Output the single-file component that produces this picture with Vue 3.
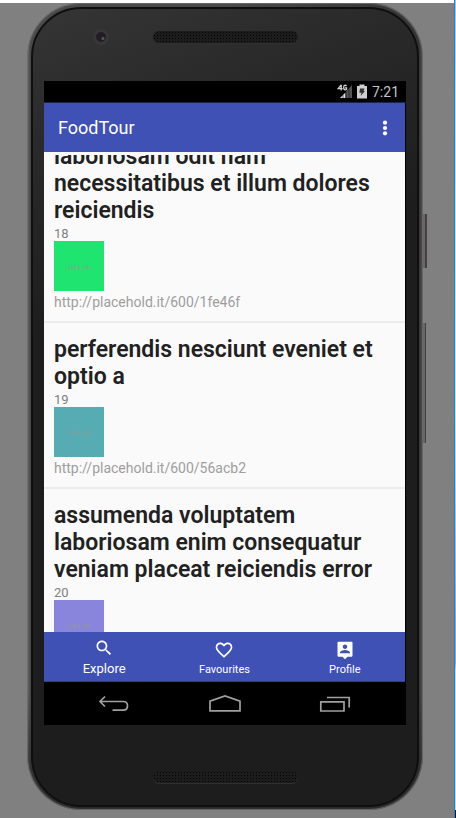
<script setup>
const photos = [
  { id: 18, title: 'laboriosam odit nam necessitatibus et illum dolores reiciendis', tone: 'green', url: 'http://placehold.it/600/1fe46f' },
  { id: 19, title: 'perferendis nesciunt eveniet et optio a', tone: 'teal', url: 'http://placehold.it/600/56acb2' },
  { id: 20, title: 'assumenda voluptatem laboriosam enim consequatur veniam placeat reiciendis error', tone: 'violet' },
]
</script>

<template>
  <div class="desktop">
    <div class="phone">
      <span class="side-key power"></span>
      <span class="side-key volume"></span>
      <div class="body">
        <div class="forehead">
          <span class="camera"></span>
          <span class="speaker"></span>
        </div>

        <div class="screen">
          <div class="status">
            <svg class="signal" width="16" height="15" viewBox="0 0 16 15">
              <path d="M4.2 0.8L1.2 4.6H5.6M4.2 0.8V6.4M9.4 2.2Q9 1.2 8 1.2Q6.7 1.3 6.7 3.5Q6.7 5.8 8.1 5.9Q9.2 5.9 9.5 5.2V3.8H8" fill="none" stroke="#d5d5d5" stroke-width="1.3" />
              <path d="M3 14L8.5 8.5V14Z" fill="#e0e0e0" />
              <path d="M9 7.5L15 1V14H9Z" fill="#555" />
              <path d="M6 11V14M9 8V14M12 4.5V14" stroke="#111" stroke-width="0.6" />
            </svg>
            <svg class="battery" width="10" height="15" viewBox="0 0 10 15">
              <path d="M0 2H2.5V0.5H7.5V2H10V14.5H0Z" fill="#cfcfcf" />
              <path d="M3 4.5H7.6L6.5 7H8L3.5 12L4.5 8.7H2.3Z" fill="#333" />
            </svg>
            <span class="time">7:21</span>
          </div>

          <div class="app">
            <header class="toolbar">
              <h1>FoodTour</h1>
              <button class="more" aria-label="More options">
                <svg width="6" height="16" viewBox="0 0 6 16" fill="#fff">
                  <circle cx="3" cy="2.7" r="2.1" />
                  <circle cx="3" cy="8" r="2.1" />
                  <circle cx="3" cy="13.3" r="2.1" />
                </svg>
              </button>
            </header>

            <main class="feed">
              <div class="clip">
                <ul class="list">
                  <li v-for="photo in photos" :key="photo.id" class="item">
                    <h2>{{ photo.title }}</h2>
                    <p class="number">{{ photo.id }}</p>
                    <div class="thumb" :class="photo.tone">150 x 150</div>
                    <p v-if="photo.url" class="url">{{ photo.url }}</p>
                  </li>
                </ul>
              </div>
            </main>

            <nav class="tabs">
              <button class="tab active">
                <svg width="20" height="20" viewBox="0 0 24 24" fill="#fff"><path d="M15.5 14h-.79l-.28-.27C15.41 12.59 16 11.11 16 9.5 16 5.91 13.09 3 9.5 3S3 5.91 3 9.5 5.91 16 9.5 16c1.61 0 3.09-.59 4.23-1.57l.27.28v.79l5 4.99L20.49 19l-4.99-5zm-6 0C7.01 14 5 11.99 5 9.5S7.01 5 9.5 5 14 7.01 14 9.5 11.99 14 9.5 14z" /></svg>
                <span>Explore</span>
              </button>
              <button class="tab">
                <svg width="20" height="20" viewBox="0 0 24 24" fill="#fff"><path d="M16.5 3c-1.74 0-3.41.81-4.5 2.09C10.91 3.81 9.24 3 7.5 3 4.42 3 2 5.42 2 8.5c0 3.78 3.4 6.86 8.55 11.54L12 21.35l1.45-1.32C18.6 15.36 22 12.28 22 8.5 22 5.42 19.58 3 16.5 3zm-4.4 15.55l-.1.1-.1-.1C7.14 14.24 4 11.39 4 8.5 4 6.5 5.5 5 7.5 5c1.54 0 3.04.99 3.57 2.36h1.87C13.46 5.99 14.96 5 16.5 5c2 0 3.5 1.5 3.5 3.5 0 2.89-3.14 5.74-7.9 10.05z" /></svg>
                <span>Favourites</span>
              </button>
              <button class="tab">
                <svg width="20" height="20" viewBox="0 0 24 24" fill="#fff"><path d="M20 2H4c-.6 0-1 .4-1 1v16c0 .6.4 1 1 1h5l3 3 3-3h5c.6 0 1-.4 1-1V3c0-.6-.4-1-1-1zm-8 3.3c1.49 0 2.7 1.21 2.7 2.7 0 1.49-1.21 2.7-2.7 2.7-1.49 0-2.7-1.21-2.7-2.7 0-1.49 1.21-2.7 2.7-2.7zM18 16H6v-.9c0-2 4-3.1 6-3.1s6 1.1 6 3.1v.9z" /></svg>
                <span>Profile</span>
              </button>
            </nav>
          </div>

          <div class="system">
            <button aria-label="Back">
              <svg width="32" height="18" viewBox="0 0 32 18" fill="none" stroke="#a0a0a0" stroke-width="1.7"><path d="M7 1.5L2 6.5L7 11.5M2 6.5H25Q29.5 6.5 29.5 10.8Q29.5 15.2 25 15.2H14.5" /></svg>
            </button>
            <button aria-label="Home">
              <svg width="34" height="18" viewBox="0 0 34 18" fill="none" stroke="#a0a0a0" stroke-width="1.7"><path d="M2 15.8V6.2L17 1L32 6.2V15.8Z" /></svg>
            </button>
            <button aria-label="Recent apps">
              <svg width="32" height="18" viewBox="0 0 32 18" fill="none" stroke="#a0a0a0" stroke-width="1.7"><path d="M1.8 6.8H25V16H1.8ZM8 2.5H30.2V12.5" /></svg>
            </button>
          </div>
        </div>

        <div class="chin">
          <span class="speaker"></span>
        </div>
      </div>
    </div>
    <div class="edge"></div>
  </div>
</template>

<style>
body {
  margin: 0;
  background: #fff;
}
</style>

<style scoped>
.desktop,
.desktop * {
  box-sizing: border-box;
}
.desktop {
  display: flex;
  height: 100vh;
  min-height: 480px;
  background: linear-gradient(#fff 3px, #808080 3px);
  font-family: Roboto, 'Liberation Sans', sans-serif;
}
.edge {
  width: 2px;
  background: linear-gradient(#9cc4e6 0, #b8dcfa 12%, #c4e2fb 50%, #8fa9c0 76%, #8fa9c0 81%, #b8dcfa 82%, #b8dcfa 99%, #111 99%);
  border-left: 1px solid #1883d7;
}
.phone {
  position: relative;
  flex: 1;
  min-width: 0;
  display: flex;
  margin: 3px 31px 8px 27px;
  padding: 4px 4px 3px;
  border-radius: 54px;
  background:
    linear-gradient(transparent 85%, #2a2a2a 99%),
    linear-gradient(90deg, #777 0, #4a4949 3px, #4a4a4a 50%, #353333 99%, #555 100%);
  box-shadow: inset 0 0 1px 1px #6a6a6a;
}
.side-key {
  position: absolute;
  left: 100%;
  background: linear-gradient(90deg, #696666 60%, #454142 60%);
}
.power {
  top: 211px;
  width: 4px;
  height: 54px;
}
.volume {
  top: 320px;
  width: 3px;
  height: 120px;
}
.body {
  flex: 1;
  min-width: 0;
  display: flex;
  flex-direction: column;
  padding: 0 11px;
  border: 2px solid #0f0f0f;
  border-radius: 50px;
  background: linear-gradient(160deg, #353535 0, #292929 16%, #1d1d1d 36%, #1d1d1d 100%);
}
.forehead {
  position: relative;
  display: flex;
  justify-content: center;
  height: 72px;
  padding-top: 22px;
}
.chin {
  display: flex;
  justify-content: center;
  height: 80px;
  padding-top: 46px;
}
.speaker {
  width: 145px;
  height: 12px;
  border-radius: 6px;
  background: radial-gradient(circle, #050505 1px, transparent 1px) 0 0 / 3px 3px #1c1c1c;
  box-shadow: 0 1px 0 #303030;
}
.camera {
  position: absolute;
  top: 20px;
  left: 49px;
  width: 16px;
  height: 16px;
  border: 3px solid #383737;
  border-radius: 50%;
  background: radial-gradient(circle at 70% 65%, #6a4a56 0 1px, #211d28 2px);
}
.screen {
  flex: 1;
  min-height: 0;
  display: flex;
  flex-direction: column;
  background: #000;
}
.status {
  display: flex;
  align-items: center;
  justify-content: flex-end;
  height: 22px;
  padding-right: 7px;
  border-bottom: 1px solid #1c2350;
  color: #c4c4c4;
}
.signal {
  margin-right: 4px;
}
.battery {
  margin-right: 5px;
}
.time {
  font-size: 14px;
}
.app {
  flex: 1;
  min-height: 0;
  display: flex;
  flex-direction: column;
  margin-right: 1px;
}
.toolbar {
  display: flex;
  align-items: center;
  justify-content: space-between;
  height: 49px;
  padding: 0 14px;
  background: #3f51b5;
  color: #fff;
}
h1 {
  margin: 0;
  font-size: 18px;
  font-weight: 400;
}
button {
  margin: 0;
  padding: 0;
  border: 0;
  background: none;
  color: inherit;
  font-family: inherit;
}
.more {
  display: flex;
  width: 12px;
  justify-content: center;
}
.feed {
  flex: 1;
  min-height: 0;
  display: flex;
  padding-top: 3px;
  background: #fafafa;
}
.clip {
  flex: 1;
  min-width: 0;
  overflow: hidden;
}
.list {
  margin: -25px 0 0;
  padding: 0;
  list-style: none;
}
.item {
  padding: 13px 20px 8px 10px;
  border-bottom: 2px solid #ececec;
}
h2 {
  margin: 0;
  color: #212121;
  font-size: 23px;
  font-weight: 600;
  line-height: 27px;
}
p {
  margin: 0;
}
.number {
  padding-top: 2px;
  color: #808080;
  font-size: 13px;
  line-height: 15px;
}
.thumb {
  width: 50px;
  height: 50px;
  color: #8e9c93;
  font-size: 5px;
  line-height: 52px;
  text-align: center;
}
.green {
  background: #1fe46f;
}
.teal {
  background: #56acb2;
}
.violet {
  background: #8985dc;
}
.url {
  color: #9e9e9e;
  font-size: 14px;
  line-height: 22px;
}
.tabs {
  display: grid;
  grid-template-columns: repeat(3, 1fr);
  height: 50px;
  background: #3f51b5;
  color: #fff;
  border-bottom: 1px solid #303f91;
}
.tab {
  display: flex;
  flex-direction: column;
  align-items: center;
  gap: 3px;
  padding-top: 8px;
  font-size: 11px;
  line-height: 14px;
}
.active {
  padding-top: 6px;
  font-size: 13px;
  line-height: 16px;
}
.system {
  display: flex;
  align-items: center;
  justify-content: space-between;
  height: 43px;
  padding: 0 55px 0 54px;
}
.system svg {
  display: block;
}
</style>
